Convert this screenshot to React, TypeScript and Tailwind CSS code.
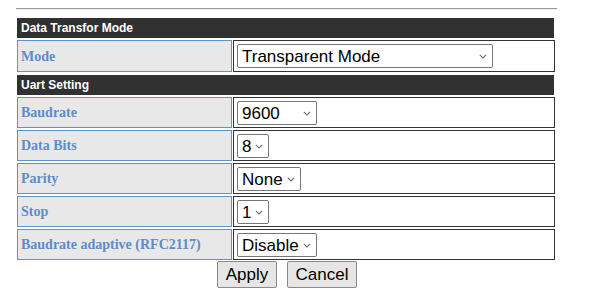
import React from "react";

const Chevron = () => (
  <svg width="8" height="5" viewBox="0 0 8 5" className="shrink-0">
    <polyline points="0.8,0.8 4,4 7.2,0.8" fill="none" stroke="#6d6d6d" strokeWidth="1.1" />
  </svg>
);

function Select({ value, w }: { value: string; w: string }) {
  return (
    <div
      className={`flex h-[24px] items-center rounded-[2px] border border-[#767676] bg-white pl-[4px] pr-[5px] text-[17px] leading-none text-black ${w}`}
      style={{ fontFamily: '"Liberation Sans", Arial, sans-serif' }}
    >
      <span className="whitespace-nowrap">{value}</span>
      <span className="ml-auto pl-[4px] flex items-center">
        <Chevron />
      </span>
    </div>
  );
}

function Header({ title }: { title: string }) {
  return (
    <div
      className="flex h-[20px] w-[537px] items-center bg-[#313131] pl-[4px] text-[12px] font-bold text-white"
      style={{ fontFamily: '"Liberation Sans", Arial, sans-serif' }}
    >
      {title}
    </div>
  );
}

function Row({ label, children, h }: { label: string; children: React.ReactNode; h: string }) {
  return (
    <div className={`flex w-[538px] gap-[1px] ${h}`}>
      <div
        className="flex w-[215px] items-center border border-[#5b95d0] bg-[#e8e8e8] pl-[3px] text-[14px] font-bold text-[#5d8ccb]"
        style={{ fontFamily: '"Liberation Serif", "Times New Roman", serif' }}
      >
        {label}
      </div>
      <div className="flex w-[322px] items-start border border-[#333333] bg-white pl-[3px] pt-[3px]">
        {children}
      </div>
    </div>
  );
}

export default function App() {
  return (
    <div className="min-h-[297px] w-[592px] bg-white pl-[16px] pt-[8px]">
      <div className="h-[2px] w-[541px] border-t border-b border-t-[#9c9c9c] border-b-[#ededed]" />
      <div className="ml-[1px] mt-[8px] flex flex-col">
        <Header title="Data Transfor Mode" />
        <div className="mt-[2px]">
          <Row label="Mode" h="h-[32px]">
            <Select value="Transparent Mode" w="w-[256px]" />
          </Row>
        </div>
        <div className="mt-[3px]">
          <Header title="Uart Setting" />
        </div>
        <div className="mt-[2px] flex flex-col gap-[2px]">
          <Row label="Baudrate" h="h-[31px]">
            <Select value="9600" w="w-[80px]" />
          </Row>
          <Row label="Data Bits" h="h-[31px]">
            <Select value="8" w="w-[32px]" />
          </Row>
          <Row label="Parity" h="h-[31px]">
            <Select value="None" w="w-[64px]" />
          </Row>
          <Row label="Stop" h="h-[31px]">
            <Select value="1" w="w-[32px]" />
          </Row>
          <Row label="Baudrate adaptive (RFC2117)" h="h-[31px]">
            <Select value="Disable" w="w-[80px]" />
          </Row>
        </div>
        <div
          className="mt-[1px] flex w-[540px] justify-center gap-[10px]"
          style={{ fontFamily: '"Liberation Sans", Arial, sans-serif' }}
        >
          <button className="h-[27px] w-[60px] rounded-[2px] border border-[#8a8a8a] bg-[#e6e6e6] text-[17px] leading-none text-black">
            Apply
          </button>
          <button className="h-[27px] w-[70px] rounded-[2px] border border-[#8a8a8a] bg-[#e6e6e6] text-[17px] leading-none text-black">
            Cancel
          </button>
        </div>
      </div>
    </div>
  );
}
